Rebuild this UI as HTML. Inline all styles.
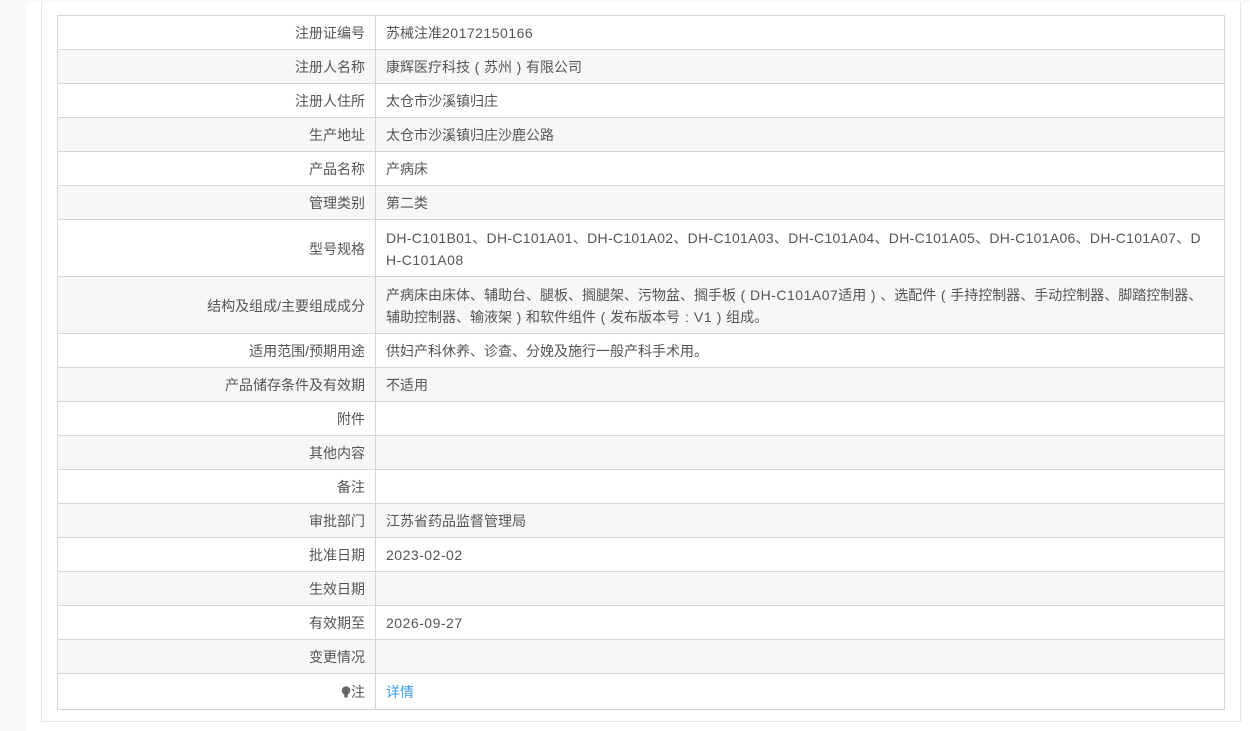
<!DOCTYPE html>
<html><head><meta charset="utf-8"><style>
html,body{margin:0;padding:0;width:1250px;height:731px;overflow:hidden;background:#f8f9fa;}
body{font-family:"Liberation Sans","Noto Sans CJK SC",sans-serif;font-size:14px;color:#555;}
.panel{position:absolute;left:27px;top:2px;width:1223px;height:729px;background:#fff;}
.inner{position:absolute;left:41px;top:2px;width:1198px;height:719px;border:1px solid #e6e6e6;border-top:none;background:#fff;}
table{position:absolute;left:57px;top:15px;width:1168px;border-collapse:collapse;border:1px solid #cfcfcf;table-layout:fixed;}
td{border:1px solid #d6d6d6;padding:1px 10px 0;height:32px;line-height:22px;word-break:break-all;}
td.l{text-align:right;}
tr:nth-child(even) td{background:#f7f7f7;}
tr.t td{height:55px;}
a{color:#3a9bf0;text-decoration:none;}
.e{letter-spacing:0.5px;}
.n{white-space:nowrap;letter-spacing:0.3px;}
.p{display:inline-block;width:14px;text-align:center;}
</style></head><body>
<div class="panel"></div><div class="inner"></div>
<table>
<colgroup><col style="width:318px"><col></colgroup>
<tr><td class="l">注册证编号</td><td>苏械注准<span class="e">20172150166</span></td></tr>
<tr><td class="l">注册人名称</td><td>康辉医疗科技<span class="p">(</span>苏州<span class="p">)</span>有限公司</td></tr>
<tr><td class="l">注册人住所</td><td>太仓市沙溪镇归庄</td></tr>
<tr><td class="l">生产地址</td><td>太仓市沙溪镇归庄沙鹿公路</td></tr>
<tr><td class="l">产品名称</td><td>产病床</td></tr>
<tr><td class="l">管理类别</td><td>第二类</td></tr>
<tr class="t"><td class="l">型号规格</td><td><div class="n">DH-C101B01、DH-C101A01、DH-C101A02、DH-C101A03、DH-C101A04、DH-C101A05、DH-C101A06、DH-C101A07、D</div><span class="e">H-C101A08</span></td></tr>
<tr class="t"><td class="l">结构及组成/主要组成成分</td><td>产病床由床体、辅助台、腿板、搁腿架、污物盆、搁手板<span class="p">(</span><span class="e">DH-C101A07</span>适用<span class="p">)</span>、选配件<span class="p">(</span>手持控制器、手动控制器、脚踏控制器、辅助控制器、输液架<span class="p">)</span>和软件组件<span class="p">(</span>发布版本号<span class="p">:</span><span class="e">V1</span><span class="p">)</span>组成。</td></tr>
<tr><td class="l">适用范围/预期用途</td><td>供妇产科休养、诊查、分娩及施行一般产科手术用。</td></tr>
<tr><td class="l">产品储存条件及有效期</td><td>不适用</td></tr>
<tr><td class="l">附件</td><td></td></tr>
<tr><td class="l">其他内容</td><td></td></tr>
<tr><td class="l">备注</td><td></td></tr>
<tr><td class="l">审批部门</td><td>江苏省药品监督管理局</td></tr>
<tr><td class="l">批准日期</td><td><span class="e">2023-02-02</span></td></tr>
<tr><td class="l">生效日期</td><td></td></tr>
<tr><td class="l">有效期至</td><td><span class="e">2026-09-27</span></td></tr>
<tr><td class="l">变更情况</td><td></td></tr>
<tr><td class="l" style="height:34px"><svg width="10" height="12" viewBox="0 0 10 12" style="vertical-align:-1px"><circle cx="5" cy="4.5" r="4.3" fill="#666"/><rect x="3.3" y="8" width="3.4" height="3.5" fill="#666"/></svg>注</td><td><a>详情</a></td></tr>
</table>
</body></html>
